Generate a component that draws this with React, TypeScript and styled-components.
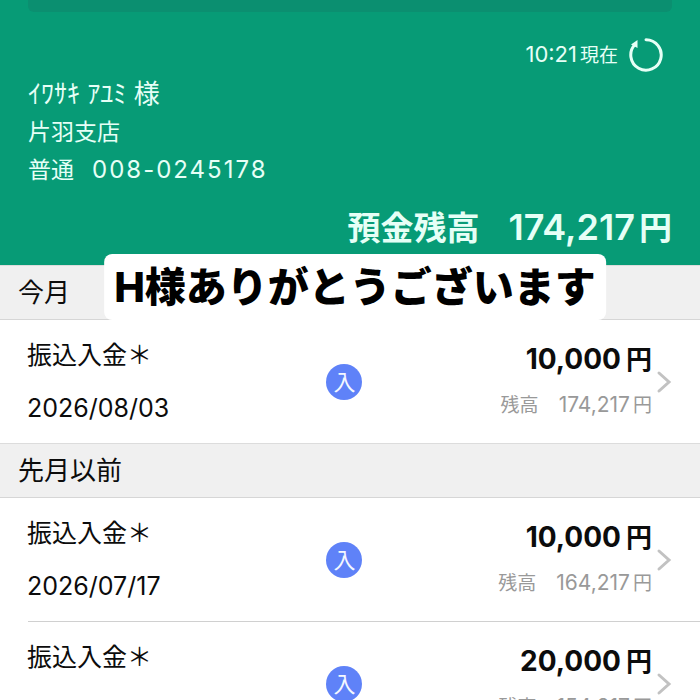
import React from 'react';
import styled, { createGlobalStyle } from 'styled-components';

const GlobalStyle = createGlobalStyle`
  *, *::before, *::after { box-sizing: border-box; }
  body {
    margin: 0;
    background: #ffffff;
    color: #0c0c0c;
    font-family: Inter, "Noto Sans CJK JP", sans-serif;
  }
`;

const Screen = styled.main`
  height: 100vh;
  overflow: hidden;
`;

const Header = styled.header`
  position: relative;
  display: flex;
  flex-direction: column;
  padding: 0 28px 14px;
  background: #079b76;
  color: #e6fff6;
`;

const CardEdge = styled.div`
  height: 12px;
  border-radius: 0 0 6px 6px;
  background: #0b8f70;
`;

const Refresh = styled.div`
  display: flex;
  align-items: center;
  justify-content: flex-end;
  gap: 10px;
  height: 40px;
  margin: 23px 8px 0 0;
`;

const Time = styled.span`
  display: flex;
  align-items: baseline;
  gap: 3px;
  font-size: 19px;
  line-height: 40px;
`;

const Clock = styled.span`
  font-size: 22px;
`;

const RefreshButton = styled.button`
  display: flex;
  padding: 0;
  border: 0;
  background: none;
  color: inherit;
`;

const Account = styled.div`
  display: flex;
  flex-direction: column;
  font-size: 23px;
  line-height: 38px;
`;

const Holder = styled.span`
  font-size: 26px;
`;

const AccountNumber = styled.span`
  display: flex;
  gap: 18px;
`;

const Digits = styled.span`
  font-size: 24px;
  letter-spacing: 2px;
`;

const Balance = styled.div`
  display: flex;
  justify-content: flex-end;
  align-items: baseline;
  margin-top: 15px;
  font-size: 36px;
  font-weight: 600;
  line-height: 46px;
`;

const BalanceLabel = styled.span`
  margin-right: 29px;
  font-size: 33px;
  font-weight: 700;
`;

const BalanceUnit = styled.span`
  margin-left: 4px;
  font-size: 33px;
  font-weight: 700;
`;

const Caption = styled.div`
  position: absolute;
  left: 50%;
  bottom: -55px;
  z-index: 1;
  margin-left: 5px;
  padding: 0 10px;
  border-radius: 8px;
  transform: translateX(-50%);
  background: #ffffff;
  color: #000000;
  font-size: 41px;
  font-weight: 800;
  line-height: 66px;
  white-space: nowrap;
`;

const SectionTitle = styled.h2`
  margin: 0;
  padding: 0 18px;
  border-top: 1px solid #dcdcdc;
  border-bottom: 1px solid #d6d6d6;
  background: #f0f0f0;
  font-size: 26px;
  font-weight: 400;
  line-height: 53px;
`;

const List = styled.ul`
  margin: 0;
  padding: 0;
  list-style: none;
`;

const Item = styled.li`
  & + &::before {
    content: "";
    display: block;
    height: 1px;
    margin-left: 28px;
    background: #d0d0d0;
  }
`;

const Row = styled.a`
  display: grid;
  grid-template-columns: 30fr 36px 29fr 20px;
  align-items: center;
  min-height: 123px;
  padding: 0 28px 0 27px;
  color: inherit;
  text-decoration: none;
`;

const Details = styled.div`
  display: grid;
  grid-template-rows: 53px 53px;
  align-items: center;
  font-size: 25px;
  line-height: 30px;
`;

const DateText = styled.time`
  font-size: 25px;
`;

const Badge = styled.span`
  display: flex;
  align-items: center;
  justify-content: center;
  height: 36px;
  border-radius: 50%;
  background: #5f82f8;
  color: #f4f8ff;
  font-size: 22px;
  font-weight: 400;
  line-height: 36px;
`;

const Amounts = styled.div`
  display: grid;
  grid-template-rows: 45px 45px;
  justify-items: end;
`;

const Amount = styled.span`
  display: flex;
  align-items: baseline;
  font-size: 28px;
  font-weight: 700;
  line-height: 45px;
`;

const Unit = styled.span`
  margin-left: 5px;
  font-size: 26px;
`;

const Remaining = styled.span`
  display: flex;
  align-items: baseline;
  color: #999999;
  font-size: 21px;
  line-height: 45px;
`;

const RemainingLabel = styled.span`
  margin-right: 20px;
  font-size: 19px;
`;

const SmallUnit = styled.span`
  margin-left: 3px;
  font-size: 19px;
`;

const Chevron = () => (
  <svg width="20" height="24" viewBox="0 0 20 24" fill="none" stroke="#c2c2c2" strokeWidth="3" strokeLinecap="round" aria-hidden="true">
    <path d="M7 3 L17 12 L7 21" />
  </svg>
);

const RefreshIcon = () => (
  <svg width="36" height="36" viewBox="0 0 36 36" fill="none" aria-hidden="true">
    <path d="M18 2.8 A15.2 15.2 0 1 1 7 7.5" stroke="currentColor" strokeWidth="3" strokeLinecap="round" />
    <path d="M9.5 3 L9.5 11 L3 7.5 Z" fill="currentColor" />
  </svg>
);

type Transaction = { title: string; date?: string; amount: string; balance: string };

const thisMonth: Transaction[] = [
  { title: '振込入金＊', date: '2026/08/03', amount: '10,000', balance: '174,217' },
];

const earlier: Transaction[] = [
  { title: '振込入金＊', date: '2026/07/17', amount: '10,000', balance: '164,217' },
  { title: '振込入金＊', amount: '20,000', balance: '154,217' },
];

const Transactions = ({ items }: { items: Transaction[] }) => (
  <List>
    {items.map((item) => (
      <Item key={item.balance}>
        <Row href="#">
          <Details>
            <span>{item.title}</span>
            {item.date && <DateText>{item.date}</DateText>}
          </Details>
          <Badge>入</Badge>
          <Amounts>
            <Amount>{item.amount}<Unit>円</Unit></Amount>
            <Remaining>
              <RemainingLabel>残高</RemainingLabel>
              {item.balance}<SmallUnit>円</SmallUnit>
            </Remaining>
          </Amounts>
          <Chevron />
        </Row>
      </Item>
    ))}
  </List>
);

export default function App() {
  return (
    <>
      <GlobalStyle />
      <Screen lang="ja">
        <Header>
          <CardEdge />
          <Refresh>
            <Time><Clock>10:21</Clock><span>現在</span></Time>
            <RefreshButton type="button" aria-label="更新"><RefreshIcon /></RefreshButton>
          </Refresh>
          <Account>
            <Holder>ｲﾜｻｷ ｱﾕﾐ 様</Holder>
            <span>片羽支店</span>
            <AccountNumber><span>普通</span><Digits>008-0245178</Digits></AccountNumber>
          </Account>
          <Balance>
            <BalanceLabel>預金残高</BalanceLabel>
            174,217<BalanceUnit>円</BalanceUnit>
          </Balance>
          <Caption>H様ありがとうございます</Caption>
        </Header>
        <SectionTitle>今月</SectionTitle>
        <Transactions items={thisMonth} />
        <SectionTitle>先月以前</SectionTitle>
        <Transactions items={earlier} />
      </Screen>
    </>
  );
}
